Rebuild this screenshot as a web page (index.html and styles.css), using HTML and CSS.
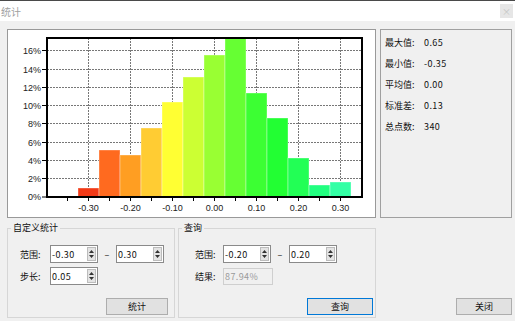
FILE: index.html
```html
<!DOCTYPE html>
<html lang="zh-CN">
<head>
    <meta charset="UTF-8">
    <title>统计</title>
    <link rel="stylesheet" href="styles.css">
</head>
<body>
    <div class="titlebar">
        <span class="title">统计</span>
        <span class="close">×</span>
    </div>
    <div class="content">
        <div class="top">
            <div class="chart-panel">
                <svg width="367" height="187" viewBox="0 0 367 187">
                    <!-- grid -->
                    <g class="grid">
                        <line x1="39" y1="148.5" x2="354" y2="148.5"/>
                        <line x1="39" y1="130.5" x2="354" y2="130.5"/>
                        <line x1="39" y1="112.5" x2="354" y2="112.5"/>
                        <line x1="39" y1="93.5" x2="354" y2="93.5"/>
                        <line x1="39" y1="75.5" x2="354" y2="75.5"/>
                        <line x1="39" y1="57.5" x2="354" y2="57.5"/>
                        <line x1="39" y1="39.5" x2="354" y2="39.5"/>
                        <line x1="39" y1="20.5" x2="354" y2="20.5"/>
                        <line x1="80.5" y1="8" x2="80.5" y2="167"/>
                        <line x1="122.5" y1="8" x2="122.5" y2="167"/>
                        <line x1="164.5" y1="8" x2="164.5" y2="167"/>
                        <line x1="206.5" y1="8" x2="206.5" y2="167"/>
                        <line x1="248.5" y1="8" x2="248.5" y2="167"/>
                        <line x1="290.5" y1="8" x2="290.5" y2="167"/>
                        <line x1="332.5" y1="8" x2="332.5" y2="167"/>
                    </g>
                    <!-- bars -->
                    <g class="bars">
                        <rect x="70" y="158" width="21" height="9" fill="#f23a17"/>
                        <rect x="91" y="120" width="21" height="47" fill="#ff6a1f"/>
                        <rect x="112" y="125" width="21" height="42" fill="#ff9e22"/>
                        <rect x="133" y="98" width="21" height="69" fill="#ffcc33"/>
                        <rect x="154" y="72" width="21" height="95" fill="#ffff33"/>
                        <rect x="175" y="47" width="21" height="120" fill="#ccff33"/>
                        <rect x="196" y="25" width="21" height="142" fill="#99ff33"/>
                        <rect x="217" y="8" width="21" height="159" fill="#66ff33"/>
                        <rect x="238" y="63" width="21" height="104" fill="#3cff33"/>
                        <rect x="259" y="88" width="21" height="79" fill="#22ff33"/>
                        <rect x="280" y="128" width="21" height="39" fill="#22ff55"/>
                        <rect x="301" y="155" width="21" height="12" fill="#22ff80"/>
                        <rect x="322" y="152" width="21" height="15" fill="#33ffa5"/>
                    </g>
                    <rect class="frame" x="39" y="8" width="315" height="159"/>
                    <!-- ticks -->
                    <g class="ticks">
                        <line x1="34" y1="167" x2="39" y2="167"/>
                        <line x1="34" y1="148.5" x2="39" y2="148.5"/>
                        <line x1="34" y1="130.5" x2="39" y2="130.5"/>
                        <line x1="34" y1="112.5" x2="39" y2="112.5"/>
                        <line x1="34" y1="93.5" x2="39" y2="93.5"/>
                        <line x1="34" y1="75.5" x2="39" y2="75.5"/>
                        <line x1="34" y1="57.5" x2="39" y2="57.5"/>
                        <line x1="34" y1="39.5" x2="39" y2="39.5"/>
                        <line x1="34" y1="20.5" x2="39" y2="20.5"/>
                        <line x1="59.5" y1="167" x2="59.5" y2="171"/>
                        <line x1="80.5" y1="167" x2="80.5" y2="171"/>
                        <line x1="101.5" y1="167" x2="101.5" y2="171"/>
                        <line x1="122.5" y1="167" x2="122.5" y2="171"/>
                        <line x1="143.5" y1="167" x2="143.5" y2="171"/>
                        <line x1="164.5" y1="167" x2="164.5" y2="171"/>
                        <line x1="185.5" y1="167" x2="185.5" y2="171"/>
                        <line x1="206.5" y1="167" x2="206.5" y2="171"/>
                        <line x1="227.5" y1="167" x2="227.5" y2="171"/>
                        <line x1="248.5" y1="167" x2="248.5" y2="171"/>
                        <line x1="269.5" y1="167" x2="269.5" y2="171"/>
                        <line x1="290.5" y1="167" x2="290.5" y2="171"/>
                        <line x1="311.5" y1="167" x2="311.5" y2="171"/>
                        <line x1="332.5" y1="167" x2="332.5" y2="171"/>
                    </g>
                    <g class="ylabels">
                        <text x="33" y="170">0%</text>
                        <text x="33" y="151.5">2%</text>
                        <text x="33" y="133.5">4%</text>
                        <text x="33" y="115.5">6%</text>
                        <text x="33" y="96.5">8%</text>
                        <text x="33" y="78.5">10%</text>
                        <text x="33" y="60.5">12%</text>
                        <text x="33" y="42.5">14%</text>
                        <text x="33" y="23.5">16%</text>
                    </g>
                    <g class="xlabels">
                        <text x="80.5" y="181">-0.30</text>
                        <text x="122.5" y="181">-0.20</text>
                        <text x="164.5" y="181">-0.10</text>
                        <text x="206.5" y="181">0.00</text>
                        <text x="248.5" y="181">0.10</text>
                        <text x="290.5" y="181">0.20</text>
                        <text x="332.5" y="181">0.30</text>
                    </g>
                </svg>
            </div>
            <div class="stats-panel">
                <div class="stat-row"><span class="stat-label">最大值:</span><span class="num">0.65</span></div>
                <div class="stat-row"><span class="stat-label">最小值:</span><span class="num">-0.35</span></div>
                <div class="stat-row"><span class="stat-label">平均值:</span><span class="num">0.00</span></div>
                <div class="stat-row"><span class="stat-label">标准差:</span><span class="num">0.13</span></div>
                <div class="stat-row"><span class="stat-label">总点数:</span><span class="num">340</span></div>
            </div>
        </div>
        <div class="bottom">
            <fieldset class="group group-custom">
                <legend>自定义统计</legend>
                <div class="field-row">
                    <span class="field-label">范围:</span>
                    <span class="spin"><span class="num">-0.30</span><span class="spin-btn"><svg width="7" height="12" viewBox="0 0 7 12"><path d="M3.5 2 L6 5 L1 5 Z M1 7 L6 7 L3.5 10 Z" fill="#333"/></svg></span></span>
                    <span class="dash">–</span>
                    <span class="spin"><span class="num">0.30</span><span class="spin-btn"><svg width="7" height="12" viewBox="0 0 7 12"><path d="M3.5 2 L6 5 L1 5 Z M1 7 L6 7 L3.5 10 Z" fill="#333"/></svg></span></span>
                </div>
                <div class="field-row">
                    <span class="field-label">步长:</span>
                    <span class="spin"><span class="num">0.05</span><span class="spin-btn"><svg width="7" height="12" viewBox="0 0 7 12"><path d="M3.5 2 L6 5 L1 5 Z M1 7 L6 7 L3.5 10 Z" fill="#333"/></svg></span></span>
                </div>
                <div class="button-row">
                    <button class="btn btn-stat">统计</button>
                </div>
            </fieldset>
            <fieldset class="group group-query">
                <legend>查询</legend>
                <div class="field-row">
                    <span class="field-label">范围:</span>
                    <span class="spin"><span class="num">-0.20</span><span class="spin-btn"><svg width="7" height="12" viewBox="0 0 7 12"><path d="M3.5 2 L6 5 L1 5 Z M1 7 L6 7 L3.5 10 Z" fill="#333"/></svg></span></span>
                    <span class="dash">–</span>
                    <span class="spin"><span class="num">0.20</span><span class="spin-btn"><svg width="7" height="12" viewBox="0 0 7 12"><path d="M3.5 2 L6 5 L1 5 Z M1 7 L6 7 L3.5 10 Z" fill="#333"/></svg></span></span>
                </div>
                <div class="field-row">
                    <span class="field-label">结果:</span>
                    <span class="result num">87.94%</span>
                </div>
                <div class="button-row">
                    <button class="btn btn-query">查询</button>
                </div>
            </fieldset>
            <div class="close-area">
                <button class="btn btn-close">关闭</button>
            </div>
        </div>
    </div>
</body>
</html>
```

FILE: styles.css
```css
* {
    box-sizing: border-box;
}
body {
    margin: 0;
    width: 515px;
    height: 321px;
    overflow: hidden;
    background-color: #f0f0f0;
    font-family: "Noto Sans CJK SC", sans-serif;
    font-size: 9px;
    color: #111;
}
.titlebar {
    height: 21px;
    background-color: #fff;
    border-top: 1px solid #4a4a4a;
    display: flex;
    align-items: center;
    padding: 0 2px 0 1px;
}
.title {
    color: #a0a0a0;
    font-size: 10px;
}
.close {
    margin-left: auto;
    width: 13px;
    height: 14px;
    background-color: #e6e6e6;
    color: #c4c4c4;
    font-size: 9px;
    display: flex;
    align-items: center;
    justify-content: center;
}
.content {
    padding: 8px 3px 0 7px;
}
.top {
    display: flex;
    gap: 4px;
    height: 189px;
}
.chart-panel {
    width: 369px;
    border: 1px solid #999;
    background-color: #fff;
}
.chart-panel svg {
    display: block;
}
.grid line {
    stroke: #777;
    stroke-width: 1;
    stroke-dasharray: 2 1;
}
.bars rect {
    stroke: rgba(255, 255, 255, 0.35);
    stroke-width: 1;
}
.frame {
    fill: none;
    stroke: #000;
    stroke-width: 2;
}
.ticks line {
    stroke: #000;
    stroke-width: 1;
}
.ylabels text,
.xlabels text {
    font-family: "Liberation Sans", Arial, sans-serif;
    font-size: 9px;
    fill: #222;
}
.ylabels text {
    text-anchor: end;
}
.xlabels text {
    text-anchor: middle;
}
.stats-panel {
    width: 132px;
    border: 1px solid #a0a0a0;
    padding: 2px 0 0 4px;
}
.stat-row {
    display: flex;
    align-items: center;
    height: 21px;
}
.stat-label {
    width: 39px;
}
.num {
    letter-spacing: 0.4px;
}
.bottom {
    display: flex;
    gap: 3px;
    height: 96px;
    margin-top: 4px;
}
.group {
    margin: 0;
    padding: 0 0 2px 0;
    border: 1px solid #d6d6d6;
    min-width: 0;
    height: 96px;
}
.group legend {
    margin-left: 3px;
    padding: 0 2px;
    line-height: 12px;
    font-size: 9px;
}
.group-custom {
    width: 168px;
    padding-left: 12px;
    padding-right: 6px;
}
.group-custom legend {
    margin-left: -9px;
}
.group-custom .field-label {
    width: 30px;
}
.group-query {
    width: 198px;
    padding-left: 16px;
    padding-right: 2px;
}
.group-query legend {
    margin-left: -13px;
}
.group-query .field-label {
    width: 28px;
}
.field-row {
    display: flex;
    align-items: center;
    height: 18px;
    margin-top: 4px;
}
.group legend + .field-row {
    margin-top: 11px;
}
.spin {
    width: 48px;
    height: 18px;
    background-color: #fff;
    border: 1px solid #8a8a8a;
    display: flex;
    align-items: center;
    justify-content: space-between;
    padding: 0 1px 0 1px;
}
.spin-btn {
    width: 9px;
    height: 14px;
    background-color: #e4e4e4;
    border: 1px solid #bcbcbc;
    display: flex;
    align-items: center;
    justify-content: center;
}
.spin-btn svg {
    display: block;
}
.dash {
    width: 18px;
    text-align: center;
}
.result {
    width: 50px;
    height: 17px;
    border: 1px solid #cfcfcf;
    background-color: #f0f0f0;
    color: #9a9a9a;
    display: flex;
    align-items: center;
    padding-left: 1px;
}
.button-row {
    display: flex;
    justify-content: flex-end;
    margin-top: 13px;
}
.btn {
    height: 17px;
    background-color: #e1e1e1;
    border: 1px solid #adadad;
    font-family: "Noto Sans CJK SC", sans-serif;
    font-size: 9px;
    color: #111;
    padding: 0;
    line-height: 15px;
}
.btn-stat {
    width: 62px;
}
.btn-query {
    width: 66px;
    border-color: #0078d7;
}
.close-area {
    flex: 1;
    display: flex;
    align-items: flex-end;
    justify-content: flex-end;
    padding-bottom: 3px;
}
.btn-close {
    width: 56px;
}
```
